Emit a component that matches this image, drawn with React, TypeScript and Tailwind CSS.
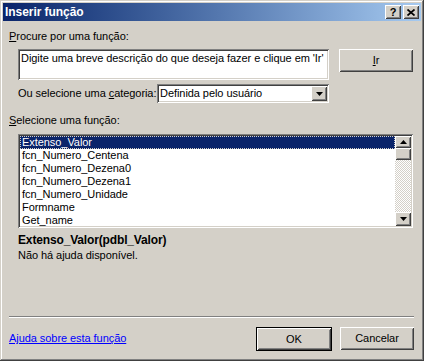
import React from "react";

const sunken =
  "shadow-[inset_1px_1px_#808080,inset_-1px_-1px_#ffffff,inset_2px_2px_#404040,inset_-2px_-2px_#d4d0c8]";
const raised =
  "shadow-[inset_1px_1px_#ffffff,inset_-1px_-1px_#404040,inset_2px_2px_#d4d0c8,inset_-2px_-2px_#808080]";

function Arrow({ up }: { up?: boolean }) {
  return (
    <svg width="7" height="4" viewBox="0 0 7 4">
      {up ? <path d="M3.5 0 L7 4 L0 4 Z" fill="#000" /> : <path d="M0 0 L7 0 L3.5 4 Z" fill="#000" />}
    </svg>
  );
}

const items = [
  "Extenso_Valor",
  "fcn_Numero_Centena",
  "fcn_Numero_Dezena0",
  "fcn_Numero_Dezena1",
  "fcn_Numero_Unidade",
  "Formname",
  "Get_name",
];

export default function App() {
  return (
    <div
      className={`w-[424px] h-[361px] bg-[#d4d0c8] p-[3px] flex flex-col text-[11px] tracking-[-0.06px] text-black whitespace-nowrap shadow-[inset_-1px_-1px_#404040,inset_1px_1px_#d4d0c8,inset_-2px_-2px_#808080,inset_2px_2px_#ffffff]`}
      style={{ fontFamily: '"Liberation Sans", Arial, sans-serif' }}
    >
      {/* Title bar */}
      <div className="h-[18px] flex items-center justify-between bg-gradient-to-r from-[#0a246a] to-[#a6caf0] pl-[2px] pr-[2px]">
        <span className="text-white font-bold text-[12px] leading-none">Inserir função</span>
        <div className="flex gap-[2px]">
          <div className={`w-[16px] h-[14px] bg-[#d4d0c8] ${raised} flex items-center justify-center font-bold text-[11px] leading-none`}>?</div>
          <div className={`w-[16px] h-[14px] bg-[#d4d0c8] ${raised} flex items-center justify-center`}>
            <svg width="8" height="7" viewBox="0 0 8 7">
              <path d="M0.5 0.5 L7.5 6.5 M7.5 0.5 L0.5 6.5" stroke="#000" strokeWidth="1.7" />
            </svg>
          </div>
        </div>
      </div>

      {/* Body */}
      <div className="flex-1 flex flex-col pl-[6px] pr-[7px]">
        <div className="mt-[9px] h-[13px] leading-[13px]">
          <span className="underline">P</span>rocure por uma função:
        </div>

        <div className="mt-[6px] flex items-start">
          <div className={`ml-[9px] w-[311px] h-[31px] bg-white ${sunken} pl-[3px] pt-[3px] leading-[13px]`}>
            Digite uma breve descrição do que deseja fazer e clique em 'Ir'
          </div>
          <div className={`ml-[10px] w-[74px] h-[23px] ${raised} flex items-center justify-center`}>
            <span className="underline">I</span>r
          </div>
        </div>

        <div className="mt-[4px] flex items-center h-[19px]">
          <span className="ml-[9px] w-[139px] leading-[13px]">
            Ou selecione uma <span className="underline">c</span>ategoria:
          </span>
          <div className={`w-[172px] h-[19px] bg-white ${sunken} flex items-center pl-[3px] pr-[2px]`}>
            <span className="flex-1 leading-[13px]">Definida pelo usuário</span>
            <div className={`w-[16px] h-[15px] bg-[#d4d0c8] ${raised} flex items-center justify-center`}>
              <Arrow />
            </div>
          </div>
        </div>

        <div className="mt-[11px] h-[13px] leading-[13px]">
          <span className="underline">S</span>elecione uma função:
        </div>

        <div className={`mt-[7px] ml-[9px] w-[395px] h-[94px] bg-white ${sunken} p-[2px] flex`}>
          <div className="flex-1 flex flex-col">
            {items.map((it, i) => (
              <div
                key={it}
                className={`h-[13px] leading-[13px] pl-[2px] ${
                  i === 0 ? "bg-[#0a246a] text-white outline outline-1 outline-dotted outline-[#d4d0c8] -outline-offset-1" : ""
                }`}
              >
                {it}
              </div>
            ))}
          </div>
          <div className="w-[16px] flex flex-col">
            <div className={`h-[12px] bg-[#d4d0c8] ${raised} flex items-center justify-center`}>
              <Arrow up />
            </div>
            <div className={`h-[12px] bg-[#d4d0c8] ${raised}`} />
            <div className="flex-1 bg-[image:repeating-conic-gradient(#d4d0c8_0_25%,#ffffff_0_50%)] bg-[length:2px_2px]" />
            <div className={`h-[14px] bg-[#d4d0c8] ${raised} flex items-center justify-center`}>
              <Arrow />
            </div>
          </div>
        </div>

        <div className="mt-[6px] ml-[9px] h-[13px] leading-[13px] font-bold text-[12px] tracking-[-0.15px]">Extenso_Valor(pdbl_Valor)</div>
        <div className="mt-[2px] ml-[9px] h-[13px] leading-[13px]">Não há ajuda disponível.</div>

        <div className="mt-[54px] h-[2px] border-t border-t-[#808080] border-b border-b-white" />

        <div className="mt-[9px] flex items-start">
          <a className="mt-[5px] text-[#0000ff] underline leading-[13px] flex-1" href="#">
            Ajuda sobre esta função
          </a>
          <div className="w-[76px] h-[24px] border border-black">
            <div className={`w-full h-full ${raised} flex items-center justify-center`}>OK</div>
          </div>
          <div className={`ml-[8px] w-[74px] h-[23px] ${raised} flex items-center justify-center`}>Cancelar</div>
        </div>
      </div>
    </div>
  );
}
